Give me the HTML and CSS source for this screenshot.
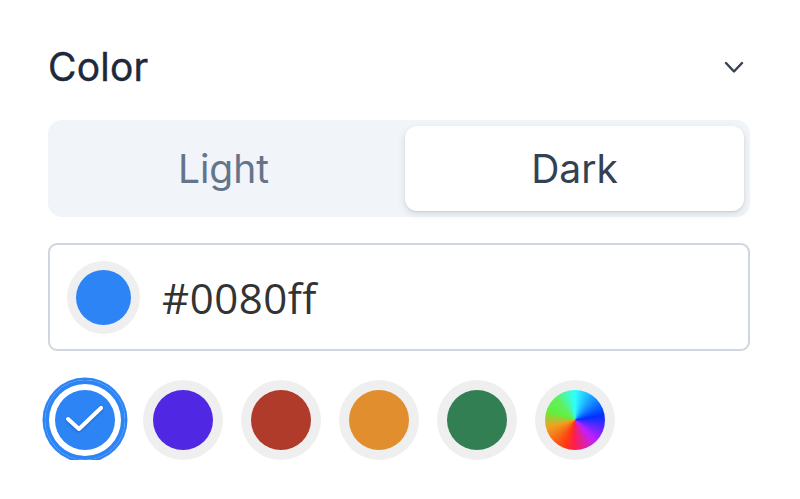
FILE: index.html
```html
<!DOCTYPE html>
<html lang="en">
<head>
<meta charset="utf-8">
<title>Color</title>
<link rel="stylesheet" href="styles.css">
</head>
<body>
<div class="panel">
  <div class="header">
    <h2 class="title">Color</h2>
    <svg class="chevron" width="20" height="12" viewBox="0 0 20 12"><path d="M2 2 L10 10.5 L18 2" fill="none" stroke="#374151" stroke-width="2.4" stroke-linecap="round" stroke-linejoin="round"/></svg>
  </div>
  <div class="segmented">
    <button class="seg">Light</button>
    <button class="seg active">Dark</button>
  </div>
  <div class="input">
    <span class="preview"><span class="preview-dot"></span></span>
    <span class="hex">#0080ff</span>
  </div>
  <div class="swatches">
    <span class="swatch selected"><span class="dot blue"><svg width="60" height="60" viewBox="0 0 60 60"><path d="M13 29 L24 39 L46 18" fill="none" stroke="#fff" stroke-width="4" stroke-linecap="round" stroke-linejoin="round"/></svg></span></span>
    <span class="swatch"><span class="dot purple"></span></span>
    <span class="swatch"><span class="dot red"></span></span>
    <span class="swatch"><span class="dot orange"></span></span>
    <span class="swatch"><span class="dot green"></span></span>
    <span class="swatch"><span class="dot rainbow"></span></span>
  </div>
</div>
</body>
</html>
```
FILE: styles.css
```css
* { box-sizing: border-box; }
html, body { margin: 0; padding: 0; background: #fff; }
body { font-family: Inter, "Noto Sans", sans-serif; }
.panel { width: 800px; padding: 44px 50px 0 48px; }
.header { display: flex; align-items: center; justify-content: space-between; height: 46px; }
.title { margin: 0; font-size: 39px; line-height: 46px; font-weight: 400; color: #1e293b; letter-spacing: 0.2px; -webkit-text-stroke: 0.4px #1e293b; }
.chevron { margin-right: 6px; margin-top: 0; }
.segmented { margin-top: 30px; display: grid; grid-template-columns: 1fr 1fr; gap: 12px; padding: 6px; height: 97px; background: #f1f4f8; border-radius: 14px; }
.seg { border: 0; background: transparent; font-family: Inter, "Noto Sans", sans-serif; font-size: 39px; font-weight: 400; color: #64748b; border-radius: 12px; padding: 0; }
.seg.active { background: #fff; color: #334155; box-shadow: 0 1px 2px rgba(15,23,42,.10), 0 3px 8px rgba(15,23,42,.10); }
.input { margin-top: 26px; height: 108px; border: 2px solid #cfd6df; border-radius: 9px; display: flex; align-items: center; padding-left: 17px; }
.preview { width: 73px; height: 73px; border-radius: 50%; background: #efefef; display: flex; align-items: center; justify-content: center; }
.preview-dot { width: 55px; height: 55px; border-radius: 50%; background: #2d84f5; }
.hex { margin-left: 22px; font-family: "Open Sans", sans-serif; font-size: 42px; color: #333; letter-spacing: 0.5px; }
.swatches { margin-top: 29px; margin-left: -3px; display: flex; gap: 18px; }
.swatch { width: 80px; height: 80px; border-radius: 50%; background: #efefef; display: flex; align-items: center; justify-content: center; }
.swatch.selected { background: #fff; box-shadow: inset 0 0 0 4px #2d84f5, 0 0 0 2.5px #2d84f5; }
.dot { width: 60px; height: 60px; border-radius: 50%; display: block; }
.dot svg { display: block; filter: drop-shadow(0 1px 1px rgba(0,0,0,.25)); }
.blue { background: #2d84f5; }
.purple { background: #5027e2; }
.red { background: #b03b2b; }
.orange { background: #e08e2e; }
.green { background: #327f53; }
.rainbow { background: conic-gradient(from 0deg, #30ffff, #0030ff 80deg, #c020ff 135deg, #ff2040 185deg, #ff4010 205deg, #f0a020 255deg, #60f040 290deg, #60f060 320deg, #30ffff 360deg); }
```
